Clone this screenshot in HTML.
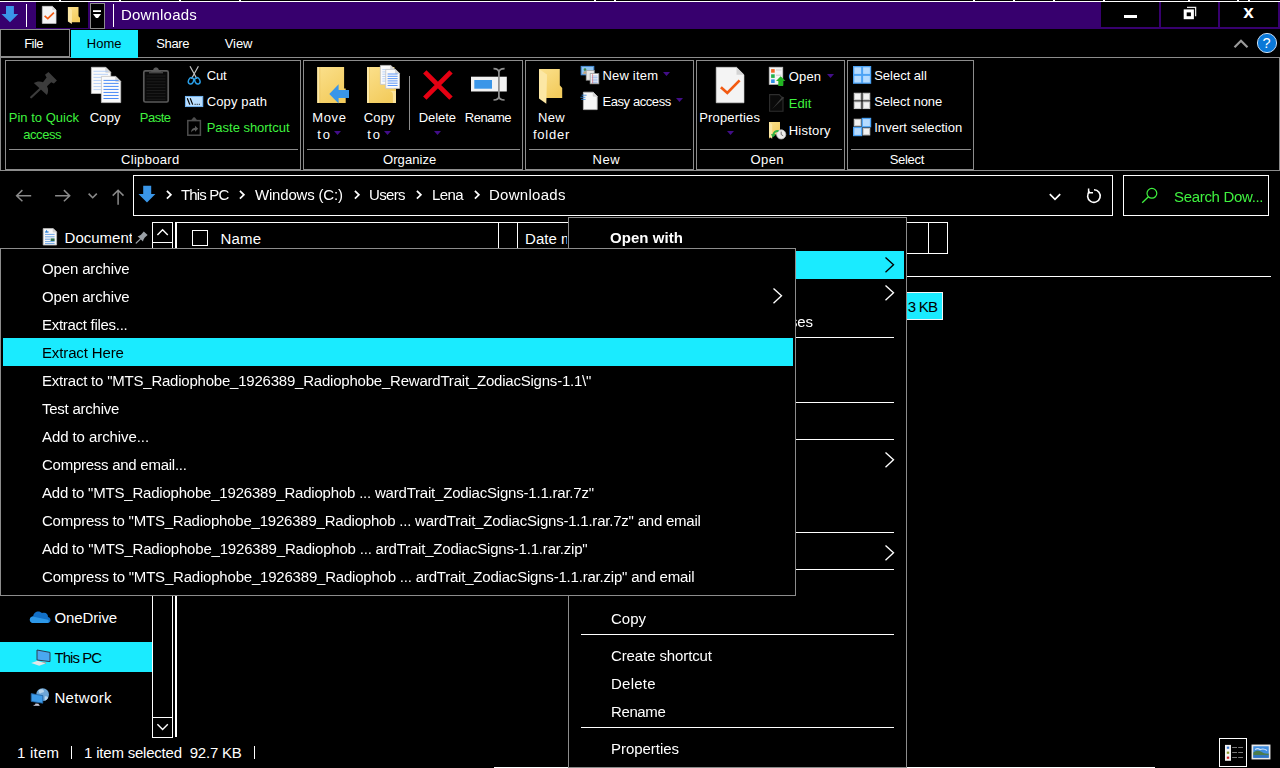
<!DOCTYPE html>
<html lang="en"><head><meta charset="utf-8"><title>Downloads</title>
<style>
html,body{margin:0;padding:0;background:#000;}
#s{position:relative;width:1280px;height:768px;overflow:hidden;background:#000;font-family:"Liberation Sans",sans-serif;}
#s div,#s svg{position:absolute;}
#s section{position:absolute;left:0;top:0;width:0;height:0;}
#s .t{white-space:pre;}
</style></head><body><div id="s">
<section class="top-strip">
<div style="left:0px;top:1px;width:1280px;height:1px;background:#fff;"></div>
<div style="left:59px;top:0px;width:2px;height:1px;background:#fff;"></div>
<div style="left:119px;top:0px;width:2px;height:1px;background:#fff;"></div>
<div style="left:179px;top:0px;width:2px;height:1px;background:#fff;"></div>
<div style="left:239px;top:0px;width:2px;height:1px;background:#fff;"></div>
<div style="left:594px;top:0px;width:2px;height:1px;background:#fff;"></div>
<div style="left:614px;top:0px;width:2px;height:1px;background:#fff;"></div>
<div style="left:973px;top:0px;width:2px;height:1px;background:#fff;"></div>
<div style="left:1013px;top:0px;width:2px;height:1px;background:#fff;"></div>
<div style="left:1053px;top:0px;width:2px;height:1px;background:#fff;"></div>
<div style="left:1103px;top:0px;width:2px;height:1px;background:#fff;"></div>
<div style="left:1188px;top:0px;width:2px;height:1px;background:#fff;"></div>
<div style="left:1237px;top:0px;width:2px;height:1px;background:#fff;"></div>
<div style="left:1248px;top:0px;width:2px;height:1px;background:#fff;"></div>
</section>
<section class="title-bar">
<div style="left:0px;top:2px;width:1280px;height:27px;background:#37006e;"></div>
<div style="left:36px;top:2px;width:52px;height:26px;background:#000;"></div>
<div style="left:90px;top:3px;width:15px;height:26px;background:#000;border:1px solid #8c8c8c;box-sizing:border-box;"></div>
<div style="left:26px;top:4px;width:1px;height:23px;background:#fff;"></div>
<div style="left:113px;top:4px;width:1px;height:23px;background:#fff;"></div>
<div class="t" style="left:120.80px;top:7px;font-size:15px;line-height:15px;color:#fff;letter-spacing:0.185px;transform:scaleY(1.03);transform-origin:0 13px;will-change:transform;">Downloads</div>
<div style="left:1101px;top:2px;width:58px;height:25px;background:#000;"></div>
<div style="left:1161px;top:2px;width:57px;height:25px;background:#000;"></div>
<div style="left:1220px;top:2px;width:58px;height:25px;background:#000;"></div>
<div style="left:1124px;top:14.5px;width:13px;height:3.5px;background:#fff;"></div>
<svg style="left:1183px;top:6px" width="14" height="14" viewBox="0 0 14 14"><path d="M4 1.4h8.6v8.8" fill="none" stroke="#e8e8e8" stroke-width="1.3"/><rect x="2.2" y="4.9" width="7.2" height="6.8" fill="none" stroke="#fff" stroke-width="3"/></svg>
<div class="t" style="left:1243.3px;top:2px;font-size:19px;line-height:20px;font-weight:bold;color:#fff">x</div>
</section>
<section class="ribbon-tabs">
<div style="left:0px;top:29px;width:70px;height:28px;background:#000;border:1px solid #8c8c8c;box-sizing:border-box;"></div>
<div style="left:0px;top:57px;width:71px;height:1px;background:#8c8c8c;"></div>
<div style="left:71px;top:30px;width:67px;height:28px;background:#1aebff;"></div>
<div class="t" style="left:24.22px;top:37px;font-size:13px;line-height:13px;color:#fff;letter-spacing:-0.551px;">File</div>
<div class="t" style="left:86.72px;top:37px;font-size:13px;line-height:13px;color:#000;letter-spacing:0.037px;">Home</div>
<div class="t" style="left:156.22px;top:37px;font-size:13px;line-height:13px;color:#fff;letter-spacing:-0.351px;">Share</div>
<div class="t" style="left:224.72px;top:37px;font-size:13px;line-height:13px;color:#fff;letter-spacing:-0.051px;">View</div>
<svg style="left:1233px;top:38px" width="16" height="11" viewBox="0 0 16 11"><path d="M1.5 9.2L8 2.7l6.5 6.5" fill="none" stroke="#9a9a9a" stroke-width="2.2"/></svg>
<svg style="left:1256px;top:32px" width="22" height="22" viewBox="0 0 22 22"><circle cx="11" cy="11" r="9.6" fill="#0a78d7" stroke="#c8dcf0" stroke-width="1"/></svg>
<div class="t" style="left:1262.43px;top:36px;font-size:14.5px;line-height:14.5px;color:#fff;">?</div>
</section>
<section class="ribbon-body">
<div style="left:138px;top:57px;width:1142px;height:1px;background:#8c8c8c;"></div>
<div style="left:0px;top:57px;width:1px;height:114px;background:#8c8c8c;"></div>
<div style="left:1279px;top:57px;width:1px;height:114px;background:#8c8c8c;"></div>
<div style="left:0px;top:170px;width:1280px;height:1px;background:#8c8c8c;"></div>
<div style="left:5px;top:60px;width:296px;height:110px;border:1px solid #8c8c8c;box-sizing:border-box;"></div>
<div style="left:9px;top:149px;width:289px;height:1px;background:#8c8c8c;"></div>
<div class="t" style="left:120.97px;top:153px;font-size:13px;line-height:13px;color:#fff;letter-spacing:0.330px;">Clipboard</div>
<div style="left:303px;top:60px;width:220px;height:110px;border:1px solid #8c8c8c;box-sizing:border-box;"></div>
<div style="left:307px;top:149px;width:213px;height:1px;background:#8c8c8c;"></div>
<div class="t" style="left:382.97px;top:153px;font-size:13px;line-height:13px;color:#fff;letter-spacing:0.079px;">Organize</div>
<div style="left:525px;top:60px;width:169px;height:110px;border:1px solid #8c8c8c;box-sizing:border-box;"></div>
<div style="left:529px;top:149px;width:162px;height:1px;background:#8c8c8c;"></div>
<div class="t" style="left:592.47px;top:153px;font-size:13px;line-height:13px;color:#fff;letter-spacing:0.642px;">New</div>
<div style="left:696px;top:60px;width:149px;height:110px;border:1px solid #8c8c8c;box-sizing:border-box;"></div>
<div style="left:700px;top:149px;width:142px;height:1px;background:#8c8c8c;"></div>
<div class="t" style="left:750.47px;top:153px;font-size:13px;line-height:13px;color:#fff;letter-spacing:0.412px;">Open</div>
<div style="left:847px;top:60px;width:127px;height:110px;border:1px solid #8c8c8c;box-sizing:border-box;"></div>
<div style="left:851px;top:149px;width:120px;height:1px;background:#8c8c8c;"></div>
<div class="t" style="left:889.72px;top:153px;font-size:13px;line-height:13px;color:#fff;letter-spacing:-0.318px;">Select</div>
<div class="t" style="left:8.72px;top:111px;font-size:13px;line-height:13px;color:#3ff23f;letter-spacing:0.019px;">Pin to Quick</div>
<div class="t" style="left:23.22px;top:128px;font-size:13px;line-height:13px;color:#3ff23f;letter-spacing:-0.434px;">access</div>
<div class="t" style="left:89.72px;top:111px;font-size:13px;line-height:13px;color:#fff;letter-spacing:0.147px;">Copy</div>
<div class="t" style="left:139.72px;top:111px;font-size:13px;line-height:13px;color:#3ff23f;letter-spacing:-0.487px;">Paste</div>
<div class="t" style="left:206.72px;top:69px;font-size:13px;line-height:13px;color:#fff;letter-spacing:-0.217px;">Cut</div>
<div class="t" style="left:206.72px;top:95px;font-size:13px;line-height:13px;color:#fff;letter-spacing:0.129px;">Copy path</div>
<div class="t" style="left:206.72px;top:121px;font-size:13px;line-height:13px;color:#3ff23f;letter-spacing:-0.024px;">Paste shortcut</div>
<div class="t" style="left:312.22px;top:111px;font-size:13px;line-height:13px;color:#fff;letter-spacing:0.668px;">Move</div>
<div class="t" style="left:317.22px;top:128px;font-size:13px;line-height:13px;color:#fff;letter-spacing:1.956px;">to</div>
<div class="t" style="left:363.72px;top:111px;font-size:13px;line-height:13px;color:#fff;letter-spacing:0.147px;">Copy</div>
<div class="t" style="left:367.22px;top:128px;font-size:13px;line-height:13px;color:#fff;letter-spacing:1.956px;">to</div>
<div class="t" style="left:418.72px;top:111px;font-size:13px;line-height:13px;color:#fff;letter-spacing:-0.056px;">Delete</div>
<div class="t" style="left:464.72px;top:111px;font-size:13px;line-height:13px;color:#fff;letter-spacing:-0.468px;">Rename</div>
<div class="t" style="left:537.97px;top:111px;font-size:13px;line-height:13px;color:#fff;letter-spacing:0.392px;">New</div>
<div class="t" style="left:532.97px;top:128px;font-size:13px;line-height:13px;color:#fff;letter-spacing:0.754px;">folder</div>
<div class="t" style="left:602.47px;top:69px;font-size:13px;line-height:13px;color:#fff;letter-spacing:0.195px;">New item</div>
<div class="t" style="left:602.47px;top:95px;font-size:13px;line-height:13px;color:#fff;letter-spacing:-0.418px;">Easy access</div>
<div class="t" style="left:699.22px;top:111px;font-size:13px;line-height:13px;color:#fff;letter-spacing:0.172px;">Properties</div>
<div class="t" style="left:788.72px;top:70px;font-size:13px;line-height:13px;color:#fff;letter-spacing:0.162px;">Open</div>
<div class="t" style="left:788.72px;top:97px;font-size:13px;line-height:13px;color:#3ff23f;letter-spacing:0.048px;">Edit</div>
<div class="t" style="left:788.72px;top:124px;font-size:13px;line-height:13px;color:#fff;letter-spacing:0.224px;">History</div>
<div class="t" style="left:874.22px;top:69px;font-size:13px;line-height:13px;color:#fff;letter-spacing:-0.022px;">Select all</div>
<div class="t" style="left:874.22px;top:95px;font-size:13px;line-height:13px;color:#fff;letter-spacing:-0.062px;">Select none</div>
<div class="t" style="left:874.22px;top:121px;font-size:13px;line-height:13px;color:#fff;letter-spacing:0.041px;">Invert selection</div>
<div style="left:409px;top:75.5px;width:1px;height:54.0px;background:#8c8c8c;"></div>
<svg style="left:333.5px;top:131px" width="7" height="4" viewBox="0 0 7 4"><path d="M0 0h7L3.5 4z" fill="#420e88"/></svg>
<svg style="left:383.5px;top:131px" width="7" height="4" viewBox="0 0 7 4"><path d="M0 0h7L3.5 4z" fill="#420e88"/></svg>
<svg style="left:433.5px;top:131px" width="7" height="4" viewBox="0 0 7 4"><path d="M0 0h7L3.5 4z" fill="#420e88"/></svg>
<svg style="left:727px;top:131px" width="7" height="4" viewBox="0 0 7 4"><path d="M0 0h7L3.5 4z" fill="#420e88"/></svg>
<svg style="left:663px;top:72px" width="7" height="4" viewBox="0 0 7 4"><path d="M0 0h7L3.5 4z" fill="#420e88"/></svg>
<svg style="left:676px;top:98px" width="7" height="4" viewBox="0 0 7 4"><path d="M0 0h7L3.5 4z" fill="#420e88"/></svg>
<svg style="left:827px;top:73.75px" width="7" height="4" viewBox="0 0 7 4"><path d="M0 0h7L3.5 4z" fill="#420e88"/></svg>
<svg width="0" height="0" style="left:0;top:0"><defs><linearGradient id="fg" x1="0" y1="0" x2="0.6" y2="1"><stop offset="0" stop-color="#fbe08c"/><stop offset="1" stop-color="#f3cc5e"/></linearGradient></defs></svg>
<svg style="left:0px;top:3px" width="20" height="22" viewBox="0 3 20 22"><path d="M6 5.9h7.9v8.1h4.3L10 22.2 1.5 14H6z" fill="#3a96e8"/></svg>
<svg style="left:40px;top:4px" width="20" height="22" viewBox="40 4 20 22"><path d="M42.3 6.3h10.074l3.7260000000000004 3.7260000000000004v13.473999999999998h-13.8z" fill="#f4f4f4" stroke="#cfcfcf" stroke-width="0.6"/><path d="M52.373999999999995 6.3v3.7260000000000004h3.7260000000000004z" fill="#d4d4d4"/><path d="M44.6 15.9L47.8 18.7L53.9 12.7" fill="none" stroke="#f25a12" stroke-width="1.7"/></svg>
<svg style="left:66px;top:5px" width="16" height="21" viewBox="66 5 16 21"><path d="M67.9 7h10.6v9.3l1.5 1.4v4.6h-8.5z" fill="url(#fg)"/><path d="M67.9 7l4.0 2.7v14.2l-4.0 -2.5z" fill="#fce7a4"/></svg>
<svg style="left:92px;top:9px" width="10" height="10" viewBox="92 9 10 10"><rect x="93" y="10.2" width="8" height="1.8" fill="#fff"/><path d="M93 14h8l-3 3.9h-2z" fill="#fff"/></svg>
<svg style="left:29px;top:70px" width="30" height="30" viewBox="29 70 30 30"><path d="M31.2 97.3L40 89" stroke="#3c3c3c" stroke-width="2.2" stroke-linecap="round"/><path d="M33.8 83.1C36.5 81.3 40 81 43 82.3L46.6 77.6 45 74.7 48.5 71.9 56.9 80.6 53.9 83.6 51.2 82.2 47 86.3C48.6 89.4 48.4 92.4 46.9 95z" fill="#3c3c3c"/></svg>
<svg style="left:90px;top:65px" width="33" height="40" viewBox="90 65 33 40"><path d="M91.4 67.3h14.3l5 5v21.2h-19.3z" fill="#fafafa" stroke="#c4c4c4" stroke-width="0.8"/><path d="M105.7 67.3v5h5z" fill="#d8d8d8" stroke="#c4c4c4" stroke-width="0.5"/><path d="M93.5 71.30H108" stroke="#a9c9f7" stroke-width="0.8"/><path d="M93.5 74.35H108" stroke="#a9c9f7" stroke-width="0.8"/><path d="M93.5 77.40H108" stroke="#a9c9f7" stroke-width="0.8"/><path d="M93.5 80.45H108" stroke="#a9c9f7" stroke-width="0.8"/><path d="M93.5 83.50H108" stroke="#a9c9f7" stroke-width="0.8"/><path d="M93.5 86.55H108" stroke="#a9c9f7" stroke-width="0.8"/><path d="M93.5 89.60H108" stroke="#a9c9f7" stroke-width="0.8"/><path d="M101.4 76.4h14.3l5 5v21.2h-19.3z" fill="#fafafa" stroke="#c4c4c4" stroke-width="0.8"/><path d="M115.7 76.4v5h5z" fill="#d8d8d8" stroke="#c4c4c4" stroke-width="0.5"/><path d="M103.5 80.40H118.6" stroke="#4d8df7" stroke-width="1"/><path d="M103.5 83.40H118.6" stroke="#4d8df7" stroke-width="1"/><path d="M103.5 86.42H118.6" stroke="#4d8df7" stroke-width="1"/><path d="M103.5 89.44H118.6" stroke="#4d8df7" stroke-width="1"/><path d="M103.5 92.46H118.6" stroke="#4d8df7" stroke-width="1"/><path d="M103.5 95.48H118.6" stroke="#4d8df7" stroke-width="1"/><path d="M103.5 98.50H118.6" stroke="#4d8df7" stroke-width="1"/></svg>
<svg style="left:141px;top:64px" width="30" height="41" viewBox="141 64 30 41"><rect x="143.8" y="70.8" width="24.4" height="31.2" rx="1.6" fill="#0a0a0a" stroke="#5a5a5a" stroke-width="1.7"/><path d="M146.5 76.00H165.5" stroke="#1c1c1c" stroke-width="1"/><path d="M146.5 78.90H165.5" stroke="#1c1c1c" stroke-width="1"/><path d="M146.5 81.80H165.5" stroke="#1c1c1c" stroke-width="1"/><path d="M146.5 84.70H165.5" stroke="#1c1c1c" stroke-width="1"/><path d="M146.5 87.60H165.5" stroke="#1c1c1c" stroke-width="1"/><path d="M146.5 90.50H165.5" stroke="#1c1c1c" stroke-width="1"/><path d="M146.5 93.40H165.5" stroke="#1c1c1c" stroke-width="1"/><path d="M146.5 96.30H165.5" stroke="#1c1c1c" stroke-width="1"/><path d="M146.5 99.20H165.5" stroke="#1c1c1c" stroke-width="1"/><path d="M150 72.6l3.4-3.2c0.4-2.6 4.8-2.6 5.2 0l3.4 3.2z" fill="#5a5a5a"/><rect x="149" y="71.8" width="14" height="1.6" fill="#444"/></svg>
<svg style="left:186px;top:64px" width="16" height="22" viewBox="186 64 16 22"><path d="M190 66.3l6.9 12.4M198.4 66.3l-6.9 12.4" stroke="#c4c4c4" stroke-width="1.2" fill="none"/><ellipse cx="191" cy="80.8" rx="2.5" ry="3.3" transform="rotate(25 191 80.8)" fill="none" stroke="#2a9fe8" stroke-width="1.4"/><ellipse cx="197.4" cy="80.8" rx="2.5" ry="3.3" transform="rotate(-25 197.4 80.8)" fill="none" stroke="#2a9fe8" stroke-width="1.4"/></svg>
<svg style="left:184px;top:95px" width="20" height="13" viewBox="184 95 20 13"><rect x="185.4" y="96.4" width="17.4" height="10.2" fill="#b9defe" stroke="#72b9fb" stroke-width="0.9"/><path d="M187.3 98.2l2.5 6.4M190.2 98.2l2.5 6.4" stroke="#000" stroke-width="1.2"/><path d="M194.6 104.3h1M196.7 104.3h1M198.8 104.3h1" stroke="#000" stroke-width="1"/></svg>
<svg style="left:186px;top:116px" width="17" height="21" viewBox="186 116 17 21"><rect x="187.8" y="120.6" width="12.6" height="14.6" fill="#000" stroke="#4e4e4e" stroke-width="1.5"/><path d="M190.5 121l2-2.6c0.6-1.6 2.6-1.6 3.2 0l2 2.6z" fill="#4e4e4e"/><path d="M191 132.5c0.2-3 1.6-4.6 4-4.8v-1.9l3.2 3-3.2 3v-1.9c-1.6 0-3 0.8-4 2.6z" fill="#5c5c5c"/></svg>
<svg style="left:316px;top:66px" width="34" height="39" viewBox="316 66 34 39"><path d="M317.3 67h26.799999999999997v21.6h1.6v14.4h-28.4z" fill="url(#fg)"/><path d="M317.3 67h2.2v36h-2.2z" fill="#fce7a4"/><path d="M319.5 67h0.7v36h-0.7z" fill="#e9c35a"/><path d="M329.3 94l9.3-9.7v5.6h10.4v8.1h-10.4v5.6z" fill="#3a96e8"/></svg>
<svg style="left:366px;top:64px" width="35" height="41" viewBox="366 64 35 41"><path d="M367 67h27.4v21.6h1.6v14.4h-29z" fill="url(#fg)"/><path d="M367 67h2.2v36h-2.2z" fill="#fce7a4"/><path d="M369.2 67h0.7v36h-0.7z" fill="#e9c35a"/><path d="M388.5 91c3-0.2 4.6 1.4 4.4 4.5v7.5h3.1v-12z" fill="#fbe39a"/><path d="M380.4 65.4h10.3l4 4v15h-14.3z" fill="#fafafa" stroke="#c4c4c4" stroke-width="0.8"/><path d="M390.7 65.4v4h4z" fill="#d8d8d8" stroke="#c4c4c4" stroke-width="0.5"/><path d="M382.3 69.60H392.8" stroke="#a9c9f7" stroke-width="0.8"/><path d="M382.3 71.90H392.8" stroke="#a9c9f7" stroke-width="0.8"/><path d="M382.3 74.20H392.8" stroke="#a9c9f7" stroke-width="0.8"/><path d="M382.3 76.50H392.8" stroke="#a9c9f7" stroke-width="0.8"/><path d="M382.3 78.80H392.8" stroke="#a9c9f7" stroke-width="0.8"/><path d="M382.3 81.10H392.8" stroke="#a9c9f7" stroke-width="0.8"/><path d="M385.7 69.4h9.8l4 4v15h-13.8z" fill="#fafafa" stroke="#c4c4c4" stroke-width="0.8"/><path d="M395.5 69.4v4h4z" fill="#d8d8d8" stroke="#c4c4c4" stroke-width="0.5"/><path d="M387.6 74.00H397.6" stroke="#4d8df7" stroke-width="0.9"/><path d="M387.6 76.30H397.6" stroke="#4d8df7" stroke-width="0.9"/><path d="M387.6 78.60H397.6" stroke="#4d8df7" stroke-width="0.9"/><path d="M387.6 80.90H397.6" stroke="#4d8df7" stroke-width="0.9"/><path d="M387.6 83.20H397.6" stroke="#4d8df7" stroke-width="0.9"/><path d="M387.6 85.50H397.6" stroke="#4d8df7" stroke-width="0.9"/></svg>
<svg style="left:421px;top:68px" width="34" height="34" viewBox="421 68 34 34"><path d="M424.8 71.9l26.2 26.2M451 71.9l-26.2 26.2" stroke="#e60012" stroke-width="4.8"/></svg>
<svg style="left:469px;top:66px" width="40" height="36" viewBox="469 66 40 36"><rect x="471" y="76.7" width="35.8" height="14.8" fill="#f2f2f2"/><rect x="474.3" y="80" width="17.7" height="8.7" fill="#3a96e8"/><path d="M493.5 68.6c3.6 0 5.4 1.4 5.4 4v23.4c0 2.6-1.8 4-5.4 4M504.6 68.6c-3.6 0-5.7 1.4-5.7 4M504.6 100c-3.6 0-5.7-1.4-5.7-4" fill="none" stroke="#8e8e8e" stroke-width="1.7"/></svg>
<svg style="left:537px;top:67px" width="27" height="39" viewBox="537 67 27 39"><path d="M539 69h20.8v16.2l2.4 2.8v9.9h-16z" fill="url(#fg)"/><path d="M539 69l8 5.6-0.7 29.2-7.3-5.3z" fill="#fce7a4"/></svg>
<svg style="left:580px;top:64px" width="20" height="21" viewBox="580 64 20 21"><rect x="581.2" y="66.4" width="12.6" height="8.4" fill="#8fc3f0" stroke="#4a90d9" stroke-width="1"/><circle cx="585" cy="69.6" r="1.3" fill="#3c8a4a"/><path d="M582.5 73.8l2.5-3 2.4 3z" fill="#c9a27a"/><rect x="586.2" y="70.6" width="8" height="9.6" fill="#e6e6e6" stroke="#9a9a9a" stroke-width="0.7"/><rect x="590.2" y="73.6" width="8.6" height="10.2" fill="#f8f8f8" stroke="#9a9a9a" stroke-width="0.8"/><path d="M591.6 76.00H597.6" stroke="#7ea6e8" stroke-width="0.7"/><path d="M591.6 77.60H597.6" stroke="#7ea6e8" stroke-width="0.7"/><path d="M591.6 79.20H597.6" stroke="#7ea6e8" stroke-width="0.7"/><path d="M591.6 80.80H597.6" stroke="#7ea6e8" stroke-width="0.7"/><path d="M591.6 82.40H597.6" stroke="#7ea6e8" stroke-width="0.7"/><path d="M592.6 74v9.4" stroke="#e06060" stroke-width="0.6"/></svg>
<svg style="left:579px;top:90px" width="20" height="21" viewBox="579 90 20 21"><path d="M583.4 92.2h9.8l4 4v13.399999999999999h-13.8z" fill="#f6f6f6" stroke="#bdbdbd" stroke-width="0.8"/><path d="M593.1999999999999 92.2v4h4z" fill="#d8d8d8" stroke="#bdbdbd" stroke-width="0.5"/><path d="M581.6 95.2h5M580.4 97.3h5M581.2 99.4h4.4" stroke="#2a7fd4" stroke-width="0.8"/></svg>
<svg style="left:714px;top:65px" width="32" height="40" viewBox="714 65 32 40"><path d="M716.2 67.3h20.294l7.506000000000001 7.506000000000001v27.994h-27.8z" fill="#f4f4f4" stroke="#cfcfcf" stroke-width="0.6"/><path d="M736.494 67.3v7.506000000000001h7.506000000000001z" fill="#d4d4d4"/><path d="M720.9 87.2L727.3 92.9L739.6 80.4" fill="none" stroke="#f25a12" stroke-width="2.7"/></svg>
<svg style="left:767px;top:65px" width="20" height="23" viewBox="767 65 20 23"><rect x="769.2" y="67.2" width="13.6" height="17.2" fill="#f4f4f4" stroke="#bdbdbd" stroke-width="0.7"/><rect x="771.1" y="69.1" width="3.6" height="3.6" fill="#f26522"/><rect x="771.1" y="74.3" width="3.6" height="3.6" fill="#22b14c"/><rect x="771.1" y="79.4" width="3.6" height="3.6" fill="#2d8ee8"/><path d="M776 70h5.4M776 75.2h5.4" stroke="#bbb" stroke-width="0.7"/><path d="M780.7 76.2l4.8 4.9h-2.3v5h-4.9v-5h-2.3z" fill="#22b422"/></svg>
<svg style="left:767px;top:92px" width="20" height="21" viewBox="767 92 20 21"><path d="M769.6 94.6h9.6l3.8 3.8v12.8h-13.4z" fill="#0a0a0a" stroke="#2e2e2e" stroke-width="1.1"/><path d="M772 109.2l10.6-12.6 1.6 1.2z" fill="#3a3a3a"/></svg>
<svg style="left:767px;top:120px" width="21" height="21" viewBox="767 120 21 21"><path d="M769 122h11v12.5h-7.8l-3.2 4.3z" fill="url(#fg)"/><path d="M769 122l3.2 2.2v14.6l-3.2-2z" fill="#fce7a4"/><circle cx="781.2" cy="134.4" r="4.6" fill="#ececec" stroke="#bcbcbc" stroke-width="0.8"/><path d="M781.2 131.6v2.9l2 1.3" fill="none" stroke="#555" stroke-width="0.8"/><path d="M772.3 134.4c1.2-3.4 3.6-4.8 6.6-4.2l-0.8 1.8c-1.8-0.2-3 0.6-3.8 2.4l1.7 0.4-3.4 2.6-1.8-3.6z" fill="#2fb344"/></svg>
<svg style="left:852px;top:65px" width="20" height="20" viewBox="852 65 20 20"><rect x="853" y="66" width="18.2" height="17.8" fill="#4da3f5"/><rect x="854.3" y="67.3" width="6.8" height="6.6" fill="#b5dbff"/><rect x="854.3" y="75.9" width="6.8" height="6.6" fill="#b5dbff"/><rect x="863.1" y="67.3" width="6.8" height="6.6" fill="#b5dbff"/><rect x="863.1" y="75.9" width="6.8" height="6.6" fill="#b5dbff"/></svg>
<svg style="left:852px;top:92px" width="20" height="18" viewBox="852 92 20 18"><rect x="854.3" y="93.3" width="6.6" height="6.6" fill="#f2f2f2" stroke="#c8c8c8" stroke-width="1.1"/><rect x="854.3" y="101.9" width="6.6" height="6.6" fill="#f2f2f2" stroke="#c8c8c8" stroke-width="1.1"/><rect x="863.1" y="93.3" width="6.6" height="6.6" fill="#f2f2f2" stroke="#c8c8c8" stroke-width="1.1"/><rect x="863.1" y="101.9" width="6.6" height="6.6" fill="#f2f2f2" stroke="#c8c8c8" stroke-width="1.1"/></svg>
<svg style="left:852px;top:117px" width="20" height="20" viewBox="852 117 20 20"><rect x="854.3" y="119.3" width="6.6" height="6.6" fill="#f2f2f2" stroke="#c8c8c8" stroke-width="1.1"/><rect x="863.1" y="128.3" width="6.6" height="6.6" fill="#f2f2f2" stroke="#c8c8c8" stroke-width="1.1"/><rect x="861.6" y="117.8" width="9.6" height="9.6" fill="#4da3f5"/><rect x="862.9" y="119.1" width="7" height="7" fill="#b5dbff"/><rect x="853" y="126.8" width="9.2" height="9.4" fill="#4da3f5"/><rect x="854.3" y="128.1" width="6.6" height="6.8" fill="#b5dbff"/></svg>
</section>
<section class="address-bar">
<div style="left:133px;top:175px;width:980px;height:41px;border:1px solid #fff;box-sizing:border-box;"></div>
<div style="left:1123px;top:175px;width:146px;height:41px;border:1px solid #fff;box-sizing:border-box;"></div>
<div class="t" style="left:181.10px;top:187px;font-size:15px;line-height:15px;color:#fff;letter-spacing:-0.849px;transform:scaleY(1.03);transform-origin:0 13px;will-change:transform;">This PC</div>
<div class="t" style="left:255.10px;top:187px;font-size:15px;line-height:15px;color:#fff;letter-spacing:-0.183px;transform:scaleY(1.03);transform-origin:0 13px;will-change:transform;">Windows (C:)</div>
<div class="t" style="left:369.10px;top:187px;font-size:15px;line-height:15px;color:#fff;letter-spacing:-0.668px;transform:scaleY(1.03);transform-origin:0 13px;will-change:transform;">Users</div>
<div class="t" style="left:431.60px;top:187px;font-size:15px;line-height:15px;color:#fff;letter-spacing:-0.625px;transform:scaleY(1.03);transform-origin:0 13px;will-change:transform;">Lena</div>
<div class="t" style="left:489.10px;top:187px;font-size:15px;line-height:15px;color:#fff;letter-spacing:0.285px;transform:scaleY(1.03);transform-origin:0 13px;will-change:transform;">Downloads</div>
<svg style="left:165.5px;top:189.8px" width="7" height="10" viewBox="0 0 7 10"><path d="M0.9 0.9L4.9 4.8 0.9 8.7" fill="none" stroke="#fff" stroke-width="1.7"/></svg>
<svg style="left:239.4px;top:189.8px" width="7" height="10" viewBox="0 0 7 10"><path d="M0.9 0.9L4.9 4.8 0.9 8.7" fill="none" stroke="#fff" stroke-width="1.7"/></svg>
<svg style="left:353.5px;top:189.8px" width="7" height="10" viewBox="0 0 7 10"><path d="M0.9 0.9L4.9 4.8 0.9 8.7" fill="none" stroke="#fff" stroke-width="1.7"/></svg>
<svg style="left:416px;top:189.8px" width="7" height="10" viewBox="0 0 7 10"><path d="M0.9 0.9L4.9 4.8 0.9 8.7" fill="none" stroke="#fff" stroke-width="1.7"/></svg>
<svg style="left:473.5px;top:189.8px" width="7" height="10" viewBox="0 0 7 10"><path d="M0.9 0.9L4.9 4.8 0.9 8.7" fill="none" stroke="#fff" stroke-width="1.7"/></svg>
<div class="t" style="left:1174.10px;top:189px;font-size:15px;line-height:15px;color:#3ff23f;letter-spacing:-0.324px;transform:scaleY(1.03);transform-origin:0 13px;will-change:transform;">Search Dow...</div>
</section>
<section class="explorer-body">
<div class="t" style="left:64.60px;top:230px;font-size:15px;line-height:15px;color:#fff;transform:scaleY(1.03);transform-origin:0 13px;width:67.5px;overflow:hidden;">Documents</div>
<div style="left:152px;top:222px;width:21px;height:21px;border:1px solid #fff;box-sizing:border-box;"></div>
<div style="left:152px;top:242px;width:21px;height:476px;border:1px solid #fff;box-sizing:border-box;"></div>
<div style="left:152px;top:717px;width:21px;height:21px;border:1px solid #fff;box-sizing:border-box;"></div>
<div style="left:175px;top:222px;width:2px;height:515px;background:#fff;"></div>
<div style="left:177px;top:222px;width:393px;height:1px;background:#fff;"></div>
<div style="left:498px;top:222px;width:1px;height:32px;background:#fff;"></div>
<div style="left:517px;top:222px;width:1px;height:32px;background:#fff;"></div>
<div style="left:192px;top:230px;width:16px;height:16px;border:1px solid #fff;box-sizing:border-box;"></div>
<div class="t" style="left:220.60px;top:231px;font-size:15px;line-height:15px;color:#fff;letter-spacing:0.161px;transform:scaleY(1.03);transform-origin:0 13px;">Name</div>
<div class="t" style="left:525.10px;top:231px;font-size:15px;line-height:15px;color:#fff;transform:scaleY(1.03);transform-origin:0 13px;width:42px;overflow:hidden;">Date modified</div>
<div style="left:900px;top:222px;width:48px;height:1px;background:#fff;"></div>
<div style="left:900px;top:253px;width:48px;height:1px;background:#fff;"></div>
<div style="left:928px;top:222px;width:1px;height:32px;background:#fff;"></div>
<div style="left:947px;top:222px;width:1px;height:32px;background:#fff;"></div>
<div style="left:900px;top:276px;width:371px;height:1px;background:#fff;"></div>
<div style="left:900px;top:292px;width:43px;height:28px;background:#1aebff;border:1px solid #f4f4f4;box-sizing:border-box;"></div>
<div class="t" style="left:907.80px;top:299px;font-size:15px;line-height:15px;color:#000;letter-spacing:-0.777px;transform:scaleY(1.03);transform-origin:0 13px;">3 KB</div>
<div class="t" style="left:54.40px;top:610px;font-size:15px;line-height:15px;color:#fff;letter-spacing:-0.080px;transform:scaleY(1.03);transform-origin:0 13px;">OneDrive</div>
<div style="left:0px;top:642px;width:152px;height:30px;background:#1aebff;"></div>
<div class="t" style="left:54.40px;top:650px;font-size:15px;line-height:15px;color:#000;letter-spacing:-0.924px;transform:scaleY(1.03);transform-origin:0 13px;">This PC</div>
<div class="t" style="left:54.40px;top:690px;font-size:15px;line-height:15px;color:#fff;letter-spacing:0.364px;transform:scaleY(1.03);transform-origin:0 13px;">Network</div>
<div class="t" style="left:17.10px;top:745px;font-size:15px;line-height:15px;color:#fff;letter-spacing:0.208px;transform:scaleY(1.03);transform-origin:0 13px;">1 item</div>
<div class="t" style="left:84.10px;top:745px;font-size:15px;line-height:15px;color:#fff;letter-spacing:-0.211px;transform:scaleY(1.03);transform-origin:0 13px;">1 item selected  92.7 KB</div>
<div style="left:71px;top:746px;width:1px;height:13px;background:#fff;"></div>
<div style="left:254px;top:746px;width:1px;height:13px;background:#fff;"></div>
<div style="left:1219px;top:738px;width:28px;height:29px;border:1px solid #fff;box-sizing:border-box;"></div>
<div style="left:494px;top:767px;width:661px;height:1px;background:#fff;"></div>
<svg style="left:14px;top:188px" width="19" height="16" viewBox="14 188 19 16"><path d="M31.2 195.7H16.6M22.4 190.1l-5.8 5.6 5.8 5.6" fill="none" stroke="#8a8a8a" stroke-width="1.5"/></svg>
<svg style="left:53px;top:188px" width="19" height="16" viewBox="53 188 19 16"><path d="M55.1 195.7h14.6M63.9 190.1l5.8 5.6-5.8 5.6" fill="none" stroke="#8a8a8a" stroke-width="1.5"/></svg>
<svg style="left:87px;top:191px" width="12" height="10" viewBox="87 191 12 10"><path d="M88.6 193.6l4.1 4.1 4.1-4.1" fill="none" stroke="#8a8a8a" stroke-width="1.6"/></svg>
<svg style="left:111px;top:188px" width="15" height="18" viewBox="111 188 15 18"><path d="M118.1 204.8v-14M112.7 195.6l5.4-5.4 5.4 5.4" fill="none" stroke="#8a8a8a" stroke-width="1.5"/></svg>
<svg style="left:137px;top:184px" width="20" height="20" viewBox="137 184 20 20"><path d="M143.2 185.8h8v8.2h4.2L147 202.4 138.5 194h4.7z" fill="#3a96e8"/></svg>
<svg style="left:1048px;top:192px" width="14" height="10" viewBox="1048 192 14 10"><path d="M1049.8 194.2l5.2 5.1 5.2-5.1" fill="none" stroke="#fff" stroke-width="1.7"/></svg>
<svg style="left:1085px;top:186px" width="18" height="19" viewBox="1085 186 18 19"><path d="M1089.6 191.4a6.3 6.3 0 1 0 4.4-1.7" fill="none" stroke="#fff" stroke-width="1.6"/><path d="M1088.6 188.4v4.4h4.4" fill="none" stroke="#fff" stroke-width="1.5"/></svg>
<svg style="left:1140px;top:186px" width="19" height="19" viewBox="1140 186 19 19"><circle cx="1151.9" cy="193.3" r="4.9" fill="none" stroke="#3ff23f" stroke-width="1.2"/><path d="M1148.4 196.8l-6.2 5.9" stroke="#3ff23f" stroke-width="1.3"/></svg>
<svg style="left:42px;top:227px" width="16" height="19" viewBox="42 227 16 19"><path d="M43.2 228.6h9.9l3.5 3.5v12.899999999999999h-13.4z" fill="#f7f7f7" stroke="#bdbdbd" stroke-width="0.8"/><path d="M53.1 228.6v3.5h3.5z" fill="#d8d8d8" stroke="#bdbdbd" stroke-width="0.5"/><path d="M45 232h4M45 234.4h9.6M45 236.8h9.6M45 239.2h5M45 241.6h9.6M45 243.6h9.6" stroke="#4a8fe0" stroke-width="0.8"/><rect x="50.6" y="238.4" width="4" height="2.6" fill="#2f6f4f"/><path d="M46.5 229.8l1.6 2.6h-3z" fill="#2a7fd4"/></svg>
<svg style="left:135px;top:230px" width="14" height="14" viewBox="135 230 14 14"><path d="M136.2 243l4.6-4.4" stroke="#9aa0a6" stroke-width="1.2" stroke-linecap="round"/><path d="M137.6 236.2c1.6-0.4 2.8-1 3.8-2l2.4-2.8 3.8 3.6-2.8 2.4c-1 1.2-1.4 2.4-1.8 4z" fill="#9aa0a6"/></svg>
<svg style="left:154px;top:226px" width="17" height="12" viewBox="154 226 17 12"><path d="M157.4 235l5.2-5.2 5.2 5.2" fill="none" stroke="#fff" stroke-width="1.4"/></svg>
<svg style="left:154px;top:721px" width="17" height="12" viewBox="154 721 17 12"><path d="M157.4 724.2l5.2 5.2 5.2-5.2" fill="none" stroke="#fff" stroke-width="1.4"/></svg>
<svg style="left:28px;top:608px" width="24" height="17" viewBox="28 608 24 17"><path d="M33.8 623.1c-5 0-5.4-6.2-0.6-6.8 0.4-4.6 5.8-6.6 8.8-3.2 3.4-1.4 6.2 0.8 6 3.8 3.6 0.6 3.4 6.2-0.8 6.2z" fill="#1270c8"/><path d="M33.8 623.1c-4.8 0-5.4-5.6-1.2-6.7l15.4 3.4c1.6 1.2 0.8 3.3-1.6 3.3z" fill="#2d98e8"/></svg>
<svg style="left:30px;top:648px" width="22" height="20" viewBox="30 648 22 20"><path d="M37 650l13 2.4v9.2l-13-1.6z" fill="#4aa8f0" stroke="#2c3e50" stroke-width="1"/><path d="M42 661.4l3.4 0.4 0.6 2.4-5-0.6z" fill="#9aa"/><path d="M31.2 663l6.4-2.2 7.8 2.6-6.2 2.4z" fill="#e4e6e8"/></svg>
<svg style="left:29px;top:686px" width="22" height="21" viewBox="29 686 22 21"><circle cx="42.6" cy="694.6" r="6.4" fill="#6ea6d6"/><path d="M38.6 690.4c2-1.6 4.2-1.4 5.2 0.2 0.8 1.6-1 2.4-2.4 2.2-1 1.4-2.6 0.8-2.8-2.4zM44.6 696.4c1.6-0.6 3.2 0 3.6 1.4-0.8 1.6-2 2.4-3.4 2.8z" fill="#b8d4ea"/><path d="M31.2 693.6l11.6 2v7.6l-11.6-1.8z" fill="#3d9be8" stroke="#1f5f9e" stroke-width="0.8"/><path d="M35.6 703.4l3 0.4 0.4 1.4-4.4-0.4z" fill="#ccd"/><path d="M33.6 705.4h6" stroke="#dde" stroke-width="0.8"/></svg>
<svg style="left:1224px;top:744px" width="21" height="18" viewBox="1224 744 21 18"><rect x="1225" y="744.9" width="6" height="15.9" fill="#f2f2f2"/><rect x="1226.8" y="746.6" width="2.4" height="2.2" fill="#3a7bd5"/><rect x="1226.8" y="751.6" width="2.4" height="2.2" fill="#8a9a2a"/><rect x="1226.8" y="756.6" width="2.4" height="2.2" fill="#d02020"/><path d="M1232.2 747.5h4.8M1238.2 747.5h4.8" stroke="#7a7a7a" stroke-width="1"/><path d="M1232.2 752.5h4.8M1238.2 752.5h4.8" stroke="#7a7a7a" stroke-width="1"/><path d="M1232.2 757.5h4.8M1238.2 757.5h4.8" stroke="#7a7a7a" stroke-width="1"/></svg>
<svg style="left:1251px;top:744px" width="20" height="16" viewBox="1251 744 20 16"><rect x="1252.4" y="745.4" width="17.2" height="13.2" fill="#3f8ee0" stroke="#e8e8e8" stroke-width="1.7"/><path d="M1253.3 752.6c3-2.6 6-2.2 8.4-0.6 2.2 1.4 4.6 2 7 1.6v1.8h-15.4z" fill="#4c7c4c"/><path d="M1253.3 755.2h15.4v2.6h-15.4z" fill="#2f73c4"/><path d="M1255 749.4c2-1.2 4-0.8 5 0.2 2-0.8 5-0.6 7 0.8" stroke="#cfe4f8" stroke-width="1.2" fill="none"/></svg>
</section>
<section class="context-menu">
<div style="left:568px;top:217px;width:339px;height:551px;background:#000;border:1px solid #8c8c8c;box-sizing:border-box;"></div>
<div class="t" style="left:610.10px;top:230px;font-size:15px;line-height:15px;color:#fff;letter-spacing:0.050px;font-weight:bold;transform:scaleY(1.03);transform-origin:0 13px;will-change:transform;">Open with</div>
<div style="left:571px;top:251px;width:333px;height:28px;background:#1aebff;"></div>
<svg style="left:884px;top:256.2px" width="12" height="18" viewBox="0 0 12 18"><path d="M1.5 1.4l8 7.4-8 7.4" fill="none" stroke="#000" stroke-width="1.35"/></svg>
<svg style="left:884px;top:284.2px" width="12" height="18" viewBox="0 0 12 18"><path d="M1.5 1.4l8 7.4-8 7.4" fill="none" stroke="#fff" stroke-width="1.35"/></svg>
<svg style="left:884px;top:451.4px" width="12" height="18" viewBox="0 0 12 18"><path d="M1.5 1.4l8 7.4-8 7.4" fill="none" stroke="#fff" stroke-width="1.35"/></svg>
<svg style="left:884px;top:544.2px" width="12" height="18" viewBox="0 0 12 18"><path d="M1.5 1.4l8 7.4-8 7.4" fill="none" stroke="#fff" stroke-width="1.35"/></svg>
<div style="left:581px;top:337px;width:313px;height:1px;background:#fff;"></div>
<div style="left:581px;top:402px;width:313px;height:1px;background:#fff;"></div>
<div style="left:581px;top:439px;width:313px;height:1px;background:#fff;"></div>
<div style="left:581px;top:532px;width:313px;height:1px;background:#fff;"></div>
<div style="left:581px;top:569px;width:313px;height:1px;background:#fff;"></div>
<div style="left:581px;top:634px;width:313px;height:1px;background:#fff;"></div>
<div style="left:581px;top:727px;width:313px;height:1px;background:#fff;"></div>
<div class="t" style="left:789.60px;top:314px;font-size:15px;line-height:15px;color:#fff;letter-spacing:-0.222px;transform:scaleY(1.03);transform-origin:0 13px;will-change:transform;">ses</div>
<div class="t" style="left:610.50px;top:611px;font-size:15px;line-height:15px;color:#fff;letter-spacing:-0.010px;transform:scaleY(1.03);transform-origin:0 13px;will-change:transform;">Copy</div>
<div class="t" style="left:610.50px;top:648px;font-size:15px;line-height:15px;color:#fff;letter-spacing:-0.110px;transform:scaleY(1.03);transform-origin:0 13px;will-change:transform;">Create shortcut</div>
<div class="t" style="left:610.50px;top:676px;font-size:15px;line-height:15px;color:#fff;letter-spacing:0.228px;transform:scaleY(1.03);transform-origin:0 13px;will-change:transform;">Delete</div>
<div class="t" style="left:610.50px;top:704px;font-size:15px;line-height:15px;color:#fff;letter-spacing:-0.381px;transform:scaleY(1.03);transform-origin:0 13px;will-change:transform;">Rename</div>
<div class="t" style="left:610.50px;top:741px;font-size:15px;line-height:15px;color:#fff;letter-spacing:-0.031px;transform:scaleY(1.03);transform-origin:0 13px;will-change:transform;">Properties</div>
</section>
<section class="context-submenu">
<div style="left:0px;top:248px;width:796px;height:348px;background:#000;border:1px solid #8c8c8c;box-sizing:border-box;"></div>
<div style="left:3px;top:338px;width:790px;height:28px;background:#1aebff;"></div>
<svg style="left:772.4px;top:287px" width="12" height="18" viewBox="0 0 12 18"><path d="M1.5 1.4l8 7.4-8 7.4" fill="none" stroke="#fff" stroke-width="1.35"/></svg>
<div class="t" style="left:42.40px;top:261px;font-size:15px;line-height:15px;color:#fff;letter-spacing:-0.147px;transform:scaleY(1.03);transform-origin:0 13px;will-change:transform;">Open archive</div>
<div class="t" style="left:42.40px;top:289px;font-size:15px;line-height:15px;color:#fff;letter-spacing:-0.147px;transform:scaleY(1.03);transform-origin:0 13px;will-change:transform;">Open archive</div>
<div class="t" style="left:42.40px;top:317px;font-size:15px;line-height:15px;color:#fff;letter-spacing:-0.289px;transform:scaleY(1.03);transform-origin:0 13px;will-change:transform;">Extract files...</div>
<div class="t" style="left:42.40px;top:345px;font-size:15px;line-height:15px;color:#000;letter-spacing:-0.133px;transform:scaleY(1.03);transform-origin:0 13px;will-change:transform;">Extract Here</div>
<div class="t" style="left:42.40px;top:373px;font-size:15px;line-height:15px;color:#fff;letter-spacing:-0.217px;transform:scaleY(1.03);transform-origin:0 13px;will-change:transform;">Extract to "MTS_Radiophobe_1926389_Radiophobe_RewardTrait_ZodiacSigns-1.1\"</div>
<div class="t" style="left:42.40px;top:401px;font-size:15px;line-height:15px;color:#fff;letter-spacing:-0.241px;transform:scaleY(1.03);transform-origin:0 13px;will-change:transform;">Test archive</div>
<div class="t" style="left:42.40px;top:429px;font-size:15px;line-height:15px;color:#fff;letter-spacing:-0.082px;transform:scaleY(1.03);transform-origin:0 13px;will-change:transform;">Add to archive...</div>
<div class="t" style="left:42.40px;top:457px;font-size:15px;line-height:15px;color:#fff;letter-spacing:-0.258px;transform:scaleY(1.03);transform-origin:0 13px;will-change:transform;">Compress and email...</div>
<div class="t" style="left:42.40px;top:485px;font-size:15px;line-height:15px;color:#fff;letter-spacing:-0.206px;transform:scaleY(1.03);transform-origin:0 13px;will-change:transform;">Add to "MTS_Radiophobe_1926389_Radiophob ... wardTrait_ZodiacSigns-1.1.rar.7z"</div>
<div class="t" style="left:42.40px;top:513px;font-size:15px;line-height:15px;color:#fff;letter-spacing:-0.216px;transform:scaleY(1.03);transform-origin:0 13px;will-change:transform;">Compress to "MTS_Radiophobe_1926389_Radiophob ... wardTrait_ZodiacSigns-1.1.rar.7z" and email</div>
<div class="t" style="left:42.40px;top:541px;font-size:15px;line-height:15px;color:#fff;letter-spacing:-0.192px;transform:scaleY(1.03);transform-origin:0 13px;will-change:transform;">Add to "MTS_Radiophobe_1926389_Radiophob ... ardTrait_ZodiacSigns-1.1.rar.zip"</div>
<div class="t" style="left:42.40px;top:569px;font-size:15px;line-height:15px;color:#fff;letter-spacing:-0.204px;transform:scaleY(1.03);transform-origin:0 13px;will-change:transform;">Compress to "MTS_Radiophobe_1926389_Radiophob ... ardTrait_ZodiacSigns-1.1.rar.zip" and email</div>
</section>
</div></body></html>
